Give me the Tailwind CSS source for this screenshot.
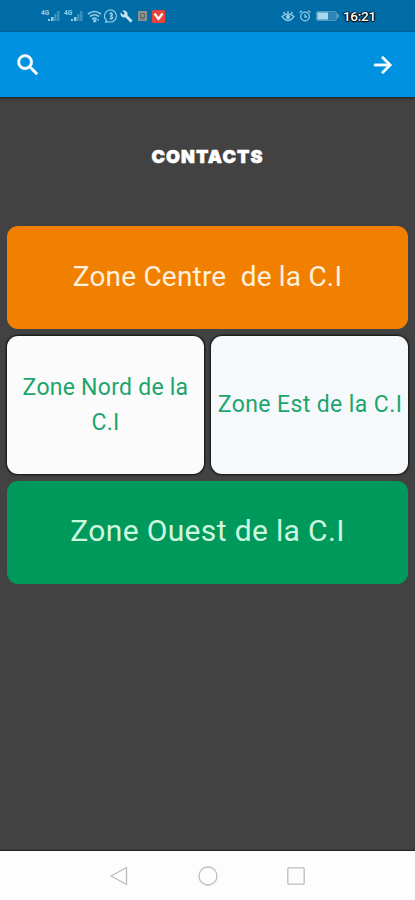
<!DOCTYPE html>
<html lang="fr">

<head>
  <meta charset="UTF-8">
  <meta name="viewport" content="width=device-width, initial-scale=1.0">
  <script src="https://cdn.jsdelivr.net/npm/@tailwindcss/browser@4"></script>
  <title>Contacts</title>
</head>

<body class="bg-[#424242] font-['Roboto',sans-serif]">
  <div class="h-[900px] flex flex-col overflow-hidden">

    <!-- status bar -->
    <div class="h-8 shrink-0 bg-[#006ca6] flex items-center justify-between pl-[41px] pr-[39px] text-[#8fc9e6]">
      <div class="flex items-center">
        <svg class="w-[20px] h-[14px] mr-[3px]" viewBox="0 0 20 14" fill="currentColor">
          <text x="0" y="6" font-size="6.500" font-weight="900">4G</text>
          <path d="M7 10h2v2H7z M10 8h2.500v4H10z" />
          <path d="M13 5h2.500v7H13z M16 2h2.500v10H16z" opacity=".4" />
        </svg>
        <svg class="w-[20px] h-[14px] mr-[3px]" viewBox="0 0 20 14" fill="currentColor">
          <text x="0" y="6" font-size="6.500" font-weight="900">4G</text>
          <path d="M7 10h2v2H7z M10 8h2.500v4H10z" />
          <path d="M13 5h2.500v7H13z M16 2h2.500v10H16z" opacity=".4" />
        </svg>
        <svg class="w-[15px] h-[14px] mr-[2px]" viewBox="0 0 15 14" fill="none" stroke="currentColor" stroke-width="1.6">
          <path d="M1 5q6.500-5 13 0M3 7.500q4.500-3.500 9 0M5.200 10q2.300-1.700 4.600 0" />
          <path d="M7 11h1.500v1.500H7zM10.500 11h1.500" />
        </svg>
        <svg class="w-[14px] h-[14px] mr-[2px]" viewBox="0 0 14 14" fill="none" stroke="currentColor" stroke-width="1.200">
          <path d="M2.500 11.500A6 6 0 1 1 5 12.800L1.500 13z" />
          <path d="M7 3v8M5.500 4.500H8L8.500 6 7 7l1.500 1v1.500h-3" />
        </svg>
        <svg class="w-[13px] h-[13px] mr-[5px]" viewBox="0 0 24 24" fill="#c5e3f2">
          <path d="M22.700 19l-9.100-9.100c.9-2.300.4-5-1.500-6.900-2-2-5-2.400-7.400-1.300L9 6 6 9 1.600 4.700C.4 7.100.9 10.100 2.900 12.100c1.900 1.900 4.600 2.400 6.900 1.500l9.100 9.100c.4.4 1 .4 1.400 0l2.300-2.300c.5-.4.5-1.100.1-1.400z" />
        </svg>
        <svg class="w-[9px] h-[10px] mr-[5px]" viewBox="0 0 9 10">
          <path d="M0 0h9v10H0z" fill="#8c9290" />
          <path d="M2.500 2.500h4v4h-4zM2.500 8h4" fill="none" stroke="#596b70" />
        </svg>
        <svg class="w-[13px] h-[13px]" viewBox="0 0 13 13">
          <rect width="13" height="13" rx="1.500" fill="#e9433b" />
          <path d="M2.500 3.500l4 5.500 4-5.500" fill="none" stroke="#fff" stroke-width="2.200" />
        </svg>
      </div>
      <div class="flex items-center">
        <svg class="w-[14px] h-[12px] mr-[4px]" viewBox="0 0 14 12" fill="none" stroke="currentColor" stroke-width="1.300">
          <path d="M1 6.500q6-5 12 0-6 8-12 0zM7 1v3M2.500 2l1.500 2M11.500 2L10 4" />
          <circle cx="7" cy="7" r="1.500" fill="currentColor" />
        </svg>
        <svg class="w-[12px] h-[12px] mr-[5px]" viewBox="0 0 12 12" fill="none" stroke="currentColor" stroke-width="1.300">
          <circle cx="6" cy="6.500" r="4.300" />
          <path d="M6 4v3h2M.5 2.500L3 .8M11.500 2.500L9 .8" />
        </svg>
        <svg class="w-[24px] h-[10px] mr-[3px]" viewBox="0 0 24 10">
          <rect x=".5" y=".5" width="20" height="9" rx="1.500" fill="#2c86b5" stroke="#4b9bc4" />
          <rect x="1.500" y="1.500" width="10.500" height="7" fill="#a9d9ee" />
          <path d="M21 3h2v4h-2z" fill="#4b9bc4" />
        </svg>
        <span class="w-[33px] pt-px whitespace-nowrap text-[13.500px] leading-none font-medium tracking-[-0.3px] text-white [text-shadow:0_0_2px_#000,1px_0_1px_#000,-1px_0_1px_#000,0_1px_1px_#000]">16:21</span>
      </div>
    </div>

    <!-- app bar -->
    <header class="relative h-[65px] shrink-0 bg-[#0091e1] flex items-center justify-between pl-[14px] pr-[19px] text-white shadow-[0_1px_3px_rgba(0,0,0,0.6)]">
      <svg class="w-[28px] h-[28px]" viewBox="0 0 24 24" fill="currentColor" stroke="currentColor" stroke-width=".5">
        <path d="M15.500 14h-.79l-.28-.27A6.471 6.471 0 0 0 16 9.500 6.500 6.500 0 1 0 9.500 16c1.610 0 3.090-.59 4.230-1.570l.27.28v.79l5 4.990L20.490 19l-4.990-5zm-6 0C7.010 14 5 11.990 5 9.500S7.010 5 9.500 5 14 7.010 14 9.500 11.990 14 9.500 14z" />
      </svg>
      <svg class="w-[26px] h-[26px]" viewBox="0 0 24 24" fill="currentColor" stroke="currentColor" stroke-width=".7">
        <path d="M12 4l-1.410 1.410L16.170 11H4v2h12.170l-5.580 5.590L12 20l8-8z" />
      </svg>
    </header>

    <main class="flex-1 px-[7px]">
      <h1 class="h-[129px] pt-[50px] text-center font-['Inter',sans-serif] font-black text-[18px] leading-5 tracking-[1.1px] text-white [-webkit-text-stroke:0.6px_white]">CONTACTS</h1>
      <div class="grid grid-cols-2 gap-[7px] text-center">
        <div class="col-span-2 h-[103px] pb-px rounded-[11px] bg-[#f28000] text-[#fff0dc] text-[28px] tracking-[0.2px] whitespace-pre flex items-center justify-center">Zone Centre  de la C.I</div>
        <div class="h-[138px] pb-px rounded-[11px] bg-[#fbfbfb] text-[#1da56d] text-[23px] leading-[35px] tracking-[0.25px] shadow-[0_0_2px_1px_#111] flex items-center justify-center">Zone Nord de la<br>C.I</div>
        <div class="h-[138px] pb-0.5 pl-px rounded-[11px] bg-[#f5f9fc] text-[#1da56d] text-[23px] leading-[35px] tracking-[0.4px] whitespace-nowrap shadow-[0_0_2px_1px_#111] flex items-center justify-center">Zone Est de la C.I</div>
        <div class="col-span-2 h-[103px] pb-1 rounded-[11px] bg-[#00995c] text-[#cdf8df] text-[30px] tracking-[0.35px] flex items-center justify-center">Zone Ouest de la C.I</div>
      </div>
    </main>

    <!-- system navigation -->
    <nav class="h-[49px] shrink-0 bg-[#fdfdfd] shadow-[0_-1px_1px_#222] flex items-center justify-center gap-[70px]">
      <svg class="w-[18px] h-5" viewBox="0 0 18 20" fill="none" stroke="#bcbcbc" stroke-width="1.300">
        <path d="M16.500 1.500v17L1 10z" stroke-linejoin="round" />
      </svg>
      <svg class="w-5 h-5" viewBox="0 0 20 20" fill="none" stroke="#bcbcbc" stroke-width="1.300">
        <circle cx="10" cy="10" r="9" />
      </svg>
      <svg class="w-[18px] h-[18px] -ml-px" viewBox="0 0 18 18" fill="none" stroke="#bcbcbc" stroke-width="1.300">
        <rect x=".8" y=".8" width="16.400" height="16.400" rx="1" />
      </svg>
    </nav>
  </div>
</body>

</html>
